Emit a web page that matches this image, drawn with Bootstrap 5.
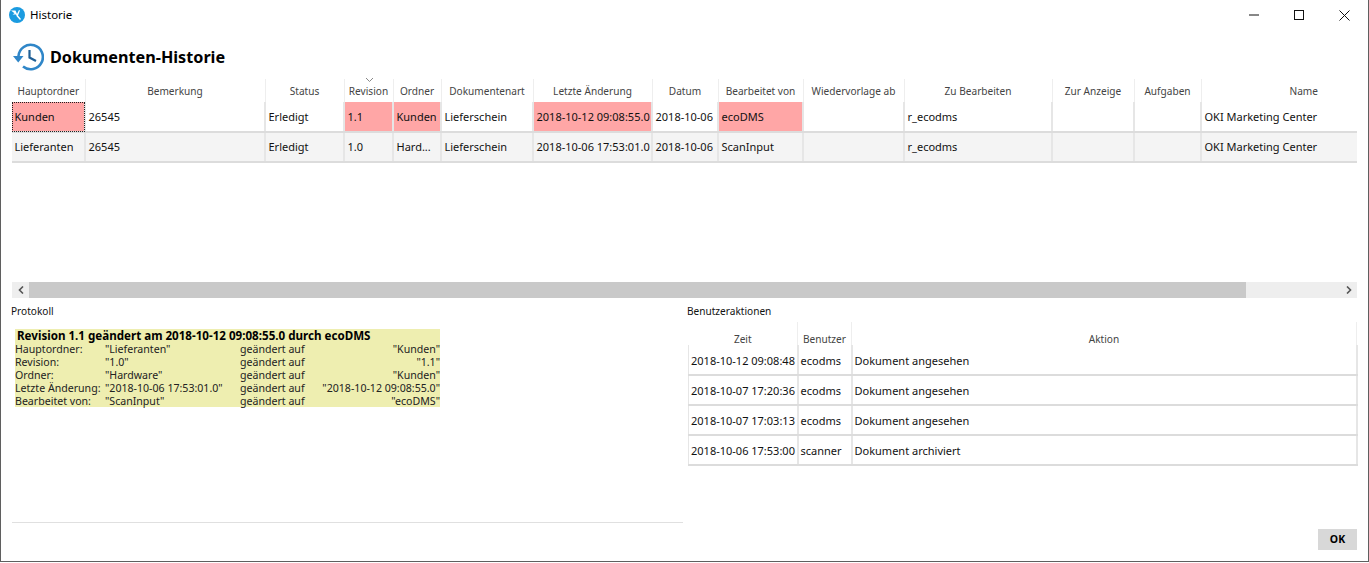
<!DOCTYPE html>
<html lang="de">
<head>
<meta charset="utf-8">
<title>Historie</title>
<link href="https://cdn.jsdelivr.net/npm/bootstrap@5.3.0/dist/css/bootstrap.min.css" rel="stylesheet">
<style>
html,body{margin:0;height:563px;overflow:hidden;background:#fff}
body{font-family:"Noto Sans","Open Sans",sans-serif;font-size:11px;color:#000;line-height:1.2}
.win{height:562px;border:solid #5f5f5f;border-width:0 1px 1px 1px;width:1369px;overflow:hidden}
.titlebar{height:30px;padding-left:8px;font-size:11.5px}
.titlebar .ttl{margin-left:5px}
.wctl{margin-left:auto;gap:35px;padding-right:18px}
.headrow{height:49px;padding-left:12px;padding-top:5px}
.headrow h1{font-family:"Noto Sans",sans-serif;font-size:16.2px;font-weight:700;margin:0 0 0 6px;line-height:1}
.gridwrap{margin-left:11px;width:1345px;height:203px}
.hist{table-layout:fixed;width:1345px;margin:0;border-collapse:collapse;--bs-table-bg:transparent;font-size:11px}
.hist th{height:23px;font-weight:400;font-size:10.1px;color:#444;text-align:center;padding:1px 0 0;border:0;border-right:1px solid #eee;white-space:nowrap;position:relative;vertical-align:middle}
.hist th:last-child{padding-left:49px;border-right:0}
.hist td{height:30px;padding:0 3px 0 2.5px;border:0;border-right:2px solid #e6e6e6;border-bottom:2px solid #dcdcdc;vertical-align:middle;white-space:nowrap;overflow:hidden;color:#111}
.hist td:last-child{border-right:0}
.hist tr.alt td{background:#f4f4f4;--bs-table-bg:#f4f4f4}
.hist td.chg{background:#ffa6a6;border-bottom:2px solid #dcdcdc}
.hist td.cur{outline:1px dotted #222;outline-offset:-1px}
.sortm{position:absolute;top:-1px;left:50%;margin-left:-3px}
.sbar{margin-left:11px;width:1345px;height:16px;background:#eee}
.sbtn{width:17px;color:#555}
.sthumb{width:1217px;background:#c9c9c9}
.lower{margin-top:7px;height:218px}
.lpane{width:686px;padding-left:10px}
.rpane{padding-left:0;width:670px}
.plabel{height:12px;line-height:12px;color:#111;font-size:10.1px}
.lyellow{margin:12px 0 0 4px;width:425px;height:78px;background:#eeeeb0;font-size:10.6px;line-height:13px;color:#222;display:grid;grid-template-columns:90px 135px 1fr;align-content:start}
.lyellow .hd{grid-column:1/-1;font-weight:700;font-size:11.6px;line-height:14px;padding-left:2px;color:#000;white-space:nowrap}
.lhr{margin-top:115px;width:671px;height:1px;background:#e0e0e0;margin-left:1px}
.act{table-layout:fixed;width:668px;margin:5px 0 0 1px;--bs-table-bg:transparent;border-collapse:collapse;font-size:11px}
.act th{height:23px;padding:0;font-weight:400;font-size:10.1px;color:#444;text-align:center;border:0;border-right:1px solid #eee}
.act td{height:30px;padding:1px 2px 0;border:0;border-right:2px solid #e6e6e6;border-bottom:2px solid #dcdcdc;white-space:nowrap;color:#111;vertical-align:middle}
.act tbody tr:first-child td{padding-top:3px}
.act td:first-child{border-left:1px solid #e6e6e6}
.okbtn{--bs-btn-bg:#d8d8d8;--bs-btn-border-color:#d8d8d8;--bs-btn-hover-bg:#d8d8d8;--bs-btn-color:#000;--bs-btn-font-size:10.5px;--bs-btn-padding-x:0;--bs-btn-padding-y:0;--bs-btn-border-radius:0;--bs-btn-font-weight:700;width:39px;height:21px;line-height:19px}
.okrow{margin:6px 11px 0 0}
.c1{width:73px}.c2{width:180px}.c3{width:79px}.c4{width:49px}.c5{width:48px}.c6{width:92px}.c7{width:119px}.c8{width:66px}.c9{width:85px}.c10{width:101px}.c11{width:148px}.c12{width:82px}.c13{width:67px}.c14{width:156px}
.a1{width:109px}.a2{width:54px}.a3{width:505px}
</style>
</head>
<body>
<div class="win">
  <div class="titlebar d-flex align-items-center">
    <svg width="16" height="16" viewBox="0 0 16 16"><circle cx="8" cy="8" r="8" fill="#1b9be0"/><path d="M2 3.500h4.500l1.500 3.500 2-4 1 .4-2 5.100 3 3.500-1 1-3.200-3.400-.8-2.100H3.500l2-1.300z" fill="#fff"/></svg>
    <span class="ttl">Historie</span>
    <div class="wctl d-flex align-items-center">
      <svg width="10" height="10" viewBox="0 0 10 10"><path d="M0 5h10" stroke="#111"/></svg>
      <svg width="10" height="10" viewBox="0 0 10 10"><rect x=".5" y=".5" width="9" height="9" fill="none" stroke="#111"/></svg>
      <svg width="11" height="11" viewBox="0 0 11 11"><path d="M.5.5l10 10M10.500.5l-10 10" stroke="#111"/></svg>
    </div>
  </div>
  <div class="headrow d-flex align-items-center">
    <svg width="31" height="28" viewBox="0 0 31 28"><path d="M5.500 13A12.200 12.200 0 1 1 10 23.500" fill="none" stroke="#2f86c8" stroke-width="2.600"/><path d="M0 13h10.500L5.200 19.500z" fill="#2f86c8"/><path d="M16.500 7v7.500l6.500 3.500" fill="none" stroke="#1f5f96" stroke-width="2.200"/></svg>
    <h1>Dokumenten-Historie</h1>
  </div>
  <div class="gridwrap">
    <table class="table hist">
      <colgroup><col class="c1"><col class="c2"><col class="c3"><col class="c4"><col class="c5"><col class="c6"><col class="c7"><col class="c8"><col class="c9"><col class="c10"><col class="c11"><col class="c12"><col class="c13"><col class="c14"></colgroup>
      <thead><tr><th>Hauptordner</th><th>Bemerkung</th><th>Status</th><th><svg class="sortm" width="7" height="4" viewBox="0 0 7 4"><path d="M0 0l3.500 3.500L7 0" fill="none" stroke="#888"/></svg>Revision</th><th>Ordner</th><th>Dokumentenart</th><th>Letzte Änderung</th><th>Datum</th><th>Bearbeitet von</th><th>Wiedervorlage ab</th><th>Zu Bearbeiten</th><th>Zur Anzeige</th><th>Aufgaben</th><th>Name</th></tr></thead>
      <tbody>
        <tr><td class="chg cur">Kunden</td><td>26545</td><td>Erledigt</td><td class="chg">1.1</td><td class="chg">Kunden</td><td>Lieferschein</td><td class="chg">2018-10-12 09:08:55.0</td><td>2018-10-06</td><td class="chg">ecoDMS</td><td></td><td>r_ecodms</td><td></td><td></td><td>OKI Marketing Center</td></tr>
        <tr class="alt"><td>Lieferanten</td><td>26545</td><td>Erledigt</td><td>1.0</td><td>Hard...</td><td>Lieferschein</td><td>2018-10-06 17:53:01.0</td><td>2018-10-06</td><td>ScanInput</td><td></td><td>r_ecodms</td><td></td><td></td><td>OKI Marketing Center</td></tr>
      </tbody>
    </table>
  </div>
  <div class="sbar d-flex">
    <div class="sbtn d-flex align-items-center justify-content-center"><svg width="6" height="8" viewBox="0 0 6 8"><path d="M5 .5L1.500 4 5 7.500" fill="none" stroke="#555" stroke-width="1.600"/></svg></div>
    <div class="sthumb"></div>
    <div class="sbtn ms-auto d-flex align-items-center justify-content-center"><svg width="6" height="8" viewBox="0 0 6 8"><path d="M1 .5L4.500 4 1 7.500" fill="none" stroke="#555" stroke-width="1.600"/></svg></div>
  </div>
  <div class="lower d-flex">
    <div class="lpane">
      <div class="plabel">Protokoll</div>
      <div class="lyellow">
        <div class="hd">Revision 1.1 geändert am 2018-10-12 09:08:55.0 durch ecoDMS</div>
        <div>Hauptordner:</div><div>"Lieferanten"</div><div class="d-flex justify-content-between"><span>geändert auf</span><span>"Kunden"</span></div>
        <div>Revision:</div><div>"1.0"</div><div class="d-flex justify-content-between"><span>geändert auf</span><span>"1.1"</span></div>
        <div>Ordner:</div><div>"Hardware"</div><div class="d-flex justify-content-between"><span>geändert auf</span><span>"Kunden"</span></div>
        <div>Letzte Änderung:</div><div>"2018-10-06 17:53:01.0"</div><div class="d-flex justify-content-between"><span>geändert auf</span><span>"2018-10-12 09:08:55.0"</span></div>
        <div>Bearbeitet von:</div><div>"ScanInput"</div><div class="d-flex justify-content-between"><span>geändert auf</span><span>"ecoDMS"</span></div>
      </div>
      <div class="lhr"></div>
    </div>
    <div class="rpane">
      <div class="plabel">Benutzeraktionen</div>
      <table class="table act">
        <colgroup><col class="a1"><col class="a2"><col class="a3"></colgroup>
        <thead><tr><th>Zeit</th><th>Benutzer</th><th>Aktion</th></tr></thead>
        <tbody>
          <tr><td>2018-10-12 09:08:48</td><td>ecodms</td><td>Dokument angesehen</td></tr>
          <tr><td>2018-10-07 17:20:36</td><td>ecodms</td><td>Dokument angesehen</td></tr>
          <tr><td>2018-10-07 17:03:13</td><td>ecodms</td><td>Dokument angesehen</td></tr>
          <tr><td>2018-10-06 17:53:00</td><td>scanner</td><td>Dokument archiviert</td></tr>
        </tbody>
      </table>
    </div>
  </div>
  <div class="okrow d-flex justify-content-end"><button class="btn okbtn" type="button">OK</button></div>
</div>
</body>
</html>
